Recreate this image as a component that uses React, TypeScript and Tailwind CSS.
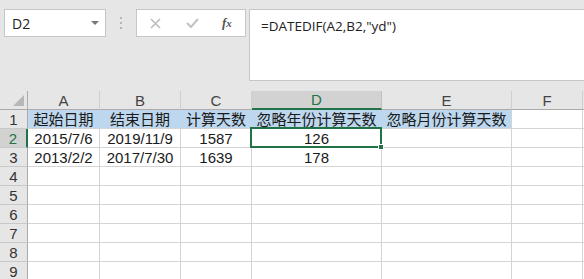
import React from 'react';

const cjk = { fontFamily: '"Liberation Sans", "Noto Sans CJK SC", sans-serif' };

const cols = ['A', 'B', 'C', 'D', 'E', 'F'];

const rows: string[][] = [
  ['起始日期', '结束日期', '计算天数', '忽略年份计算天数', '忽略月份计算天数', ''],
  ['2015/7/6', '2019/11/9', '1587', '126', '', ''],
  ['2013/2/2', '2017/7/30', '1639', '178', '', ''],
  ['', '', '', '', '', ''],
  ['', '', '', '', '', ''],
  ['', '', '', '', '', ''],
  ['', '', '', '', '', ''],
  ['', '', '', '', '', ''],
  ['', '', '', '', '', ''],
];

function Cell({ r, c, value }: { r: number; c: number; value: string }) {
  const blue = r === 0 && c < 5;
  const selected = r === 1 && c === 3;
  let cls = 'relative h-[19px] border-b border-r flex items-center justify-center text-[15px] leading-none text-[#1a1a1a] whitespace-nowrap';
  if (blue) {
    cls += c === 4 ? ' bg-[#bdd7ee] border-r-[#d4d4d4] border-b-[#d4d4d4]' : ' bg-[#bdd7ee] border-r-[#bdd7ee] border-b-[#d4d4d4]';
  } else {
    cls += ' bg-white border-[#d4d4d4]';
  }
  return (
    <div className={cls}>
      <span className="relative z-0">{value}</span>
      {selected && (
        <div className="absolute -top-[2px] -left-[2px] -right-[1px] -bottom-[1px] border-2 border-[#217346] z-10">
          <div className="absolute -right-[4px] -bottom-[4px] w-[6px] h-[6px] bg-[#217346] border border-white" />
        </div>
      )}
    </div>
  );
}

export default function App() {
  return (
    <div className="w-[584px] h-[279px] overflow-hidden bg-[#e6e6e6]" style={cjk}>
      {/* Formula bar */}
      <div className="h-[91px] flex items-start pt-[9px] pl-[4px]">
        <div className="w-[102px] h-[28px] bg-white border border-[#c6c6c6] flex items-center justify-between pl-[7px] pr-[6px]">
          <span className="text-[14px] text-[#222]" style={{ fontFamily: '"Open Sans", sans-serif' }}>D2</span>
          <svg width="8" height="4" viewBox="0 0 8 4"><path d="M0 0h8L4 4z" fill="#777" /></svg>
        </div>
        <div className="w-[30px] h-[28px] flex flex-col items-center justify-center gap-[3px]">
          <span className="w-[2px] h-[2px] bg-[#b5b5b5]" />
          <span className="w-[2px] h-[2px] bg-[#b5b5b5]" />
          <span className="w-[2px] h-[2px] bg-[#b5b5b5]" />
        </div>
        <div className="w-[110px] h-[28px] bg-white border border-[#c6c6c6] flex items-center">
          <svg className="ml-[13px]" width="11" height="11" viewBox="0 0 11 11">
            <path d="M1 1L10 10M10 1L1 10" stroke="#bdbdbd" strokeWidth="1.6" />
          </svg>
          <svg className="ml-[25px]" width="13" height="10" viewBox="0 0 13 10">
            <path d="M1 5L5 9L12 1" stroke="#c2c2c2" strokeWidth="2" fill="none" />
          </svg>
          <span className="ml-[23px] text-[13px] italic font-bold text-[#555]" style={{ fontFamily: '"Liberation Serif", serif' }}>
            f<span className="text-[11px]">x</span>
          </span>
        </div>
        <div className="ml-[3px] flex-1 h-[72px] bg-white border border-[#c6c6c6] border-r-0 pl-[11px] pt-[4px]">
          <span className="text-[13.5px] text-[#222]" style={{ fontFamily: '"Open Sans", sans-serif' }}>=DATEDIF(A2,B2,"yd")</span>
        </div>
      </div>

      {/* Sheet grid */}
      <div className="grid grid-cols-[28px_72px_81px_71px_130px_130px_71px_1fr]">
        <div className="h-[19px] bg-[#e6e6e6] border-r border-b border-[#ababab] relative">
          <svg className="absolute right-[3px] bottom-[3px]" width="11" height="11" viewBox="0 0 11 11">
            <path d="M11 0V11H0z" fill="#b7b7b7" />
          </svg>
        </div>
        {cols.map((c) =>
          c === 'D' ? (
            <div key={c} className="h-[19px] bg-[#d2d2d2] border-r border-[#c0c0c0] border-b-2 border-b-[#217346] flex items-center justify-center text-[15px] leading-none text-[#217346]">
              {c}
            </div>
          ) : (
            <div key={c} className="h-[19px] bg-[#e6e6e6] border-r border-r-[#d0d0d0] border-b border-b-[#ababab] flex items-center justify-center text-[15px] leading-none text-[#444]">
              {c}
            </div>
          )
        )}
        <div className="h-[19px] bg-[#e6e6e6] border-b border-b-[#ababab]" />

        {rows.map((row, r) => (
          <React.Fragment key={r}>
            {r === 1 ? (
              <div className="h-[19px] bg-[#d2d2d2] border-b border-b-[#c8c8c8] border-r-2 border-r-[#217346] flex items-center justify-center text-[15px] leading-none text-[#217346]">
                {r + 1}
              </div>
            ) : (
              <div className="h-[19px] bg-[#e6e6e6] border-b border-b-[#c8c8c8] border-r border-r-[#ababab] flex items-center justify-center text-[15px] leading-none text-[#333]">
                {r + 1}
              </div>
            )}
            {row.map((v, c) => (
              <Cell key={c} r={r} c={c} value={v} />
            ))}
            <div className="h-[19px] bg-white border-b border-[#d4d4d4]" />
          </React.Fragment>
        ))}
      </div>
    </div>
  );
}
